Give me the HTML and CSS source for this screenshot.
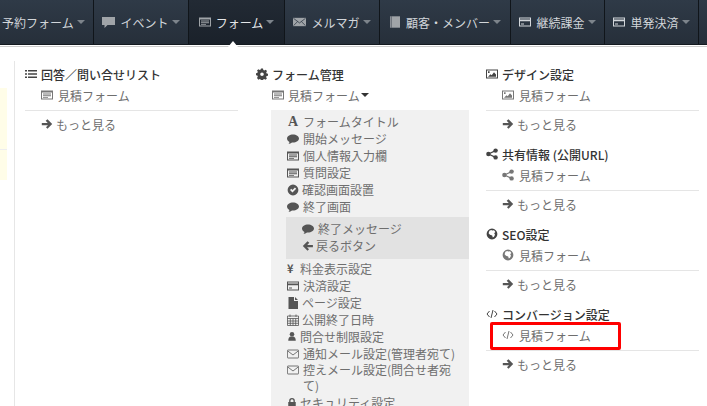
FILE: index.html
```html
<!DOCTYPE html>
<html lang="ja">
<head>
<meta charset="utf-8">
<title>フォーム</title>
<link rel="stylesheet" href="styles.css">
</head>
<body>
<svg class="defs" width="0" height="0">
  <symbol id="list" viewBox="0 0 12 12"><path d="M0 2h2v1.5H0zM3 2h9v1.5H3zM0 5.2h2v1.5H0zM3 5.2h9v1.5H3zM0 8.4h2v1.5H0zM3 8.4h9v1.5H3z"/></symbol>
  <symbol id="form" viewBox="0 0 12 12"><path fill-rule="evenodd" d="M0 1.500h12v9H0zM1 3.500v6h10v-6zM2 4.500h8v1H2zM2 6.300h8v1H2zM2 8h5v.8H2z"/></symbol>
  <symbol id="cog" viewBox="0 0 12 12"><path fill-rule="evenodd" d="M5 .5h2l.3 1.500 1 .5 1.400-.8 1.300 1.400-.8 1.300.5 1.100 1.300.3v2l-1.400.3-.5 1 .8 1.300-1.400 1.400-1.300-.8-1 .4-.3 1.500H5l-.3-1.500-1-.4-1.300.8L1 9.900l.8-1.300-.5-1L0 7.200v-2l1.300-.2.5-1.200L1 2.500l1.400-1.300 1.300.8 1-.5zM6 4.400a1.800 1.800 0 1 0 0 3.600 1.800 1.800 0 0 0 0-3.600z"/></symbol>
  <symbol id="pic" viewBox="0 0 12 12"><path fill-rule="evenodd" d="M0 1.500h12v9H0zM1 2.500v7h10v-7z"/><path d="M2 8.800l2.500-2.600 1.200 1 2.300-3 2 2.400v2.200zM2 3.300h1.600v1.600H2z"/></symbol>
  <symbol id="share" viewBox="0 0 12 12"><circle cx="2.400" cy="6" r="2.200"/><circle cx="9.600" cy="2.600" r="2.200"/><circle cx="9.600" cy="9.400" r="2.200"/><path d="M2.400 6l7.200-3.400M2.400 6l7.200 3.400" stroke="currentColor" stroke-width="1.300"/></symbol>
  <symbol id="globe" viewBox="0 0 12 12"><path fill-rule="evenodd" d="M6 .6a5.400 5.400 0 1 0 0 10.800A5.400 5.400 0 0 0 6 .6zM3.400 2.800l1.800-.8 1 .6 1.800-.3 1.400 1.800-1.200 1.200.8 1.400L8 8.800 6.800 9.600 6.200 7.400 4 6.800 2.600 5.200z"/></symbol>
  <symbol id="code" viewBox="0 0 12 12"><path d="M3.500 3L1 6l2.500 3M8.500 3L11 6 8.500 9M7 2L5 10" fill="none" stroke="currentColor" stroke-width="1"/></symbol>
  <symbol id="arrow" viewBox="0 0 12 12"><path d="M6.500 1.300L11.200 6l-4.700 4.700-1.500-1.500 2-2H.8V5h5.900l-2-2.200z"/></symbol>
  <symbol id="back" viewBox="0 0 12 12"><path d="M5.500 1.300L.8 6l4.700 4.700 1.500-1.500-2-2h5.900V5H5.300l2-2.200z"/></symbol>
  <symbol id="bubble" viewBox="0 0 12 12"><path d="M6 1.500c3.300 0 6 1.700 6 4s-2.700 4-6 4H5c-1 .9-2.200 1.400-3.600 1.500.6-.6 1-1.300 1-2.100C1 8.200 0 7 0 5.500c0-2.300 2.700-4 6-4z"/></symbol>
  <symbol id="square-bubble" viewBox="0 0 13 12"><path d="M0 1h13v8H5.500L2.500 12V9H0z"/></symbol>
  <symbol id="check" viewBox="0 0 12 12"><path fill-rule="evenodd" d="M6 .6a5.400 5.400 0 1 0 0 10.800A5.400 5.400 0 0 0 6 .6zM3 6l1.300-1.300 1.200 1.200 2.400-2.400L9.200 4.800 5.500 8.500z"/></symbol>
  <symbol id="card" viewBox="0 0 12 12"><path fill-rule="evenodd" d="M0 1.500h12v9H0zM1 5.200v4.300h10V5.200zM1 2.500v1h10v-1zM2 7.500h3v1H2z"/></symbol>
  <symbol id="file" viewBox="0 0 12 12"><path d="M1.500 0H7v4h4v8H1.500zM8 0l3 3H8z"/></symbol>
  <symbol id="cal" viewBox="0 0 12 12"><path d="M.5 2h11v9.500H.5zM.5 4.500h11M.5 7h11M.5 9.300h11M3.300 4.500v7M6 4.500v7M8.700 4.500v7M3 .5V3M9 .5V3" fill="none" stroke="currentColor" stroke-width=".8"/></symbol>
  <symbol id="user" viewBox="0 0 12 12"><circle cx="6" cy="3.200" r="2.700"/><path d="M1.500 11c0-3 1.200-4.700 2.800-5h3.400c1.600.3 2.800 2 2.800 5z"/></symbol>
  <symbol id="mail" viewBox="0 0 12 12"><path d="M1 2h10a.6.6 0 0 1 .6.600v6.800a.6.6 0 0 1-.6.600H1a.6.6 0 0 1-.6-.6V2.600A.6.6 0 0 1 1 2zM.8 3l5.200 4 5.200-4" fill="none" stroke="currentColor" stroke-width=".8"/></symbol>
  <symbol id="lock" viewBox="0 0 12 12"><path fill-rule="evenodd" d="M6 .5A3.400 3.400 0 0 0 2.600 4v1.500H1.500V12h9V5.500H9.400V4A3.400 3.400 0 0 0 6 .5zM4.200 5.500V4a1.800 1.800 0 0 1 3.600 0v1.500z"/></symbol>
  <symbol id="envfill" viewBox="0 0 14 12"><path d="M0 1.500h14v9H0z"/><path d="M.5 2l6.500 5 6.500-5M.5 10l4.500-4.500M13.500 10L9 5.500" fill="none" stroke="#2a3441" stroke-width=".8"/></symbol>
  <symbol id="book" viewBox="0 0 12 12"><path d="M1 .3H11v11.400H1z"/><path d="M2.200 .3v11.400" stroke="#2a3441" stroke-width=".6"/></symbol>
</svg>

<nav class="nav">
  <a class="nav-item first">予約フォーム<i class="caret"></i></a>
  <a class="nav-item w95"><svg class="ico nav-ico wide"><use href="#square-bubble"/></svg>イベント<i class="caret"></i></a>
  <a class="nav-item w96 active"><svg class="ico nav-ico"><use href="#form"/></svg>フォーム<i class="caret"></i></a>
  <a class="nav-item w95"><svg class="ico nav-ico wide"><use href="#envfill"/></svg>メルマガ<i class="caret"></i></a>
  <a class="nav-item w131"><svg class="ico nav-ico"><use href="#book"/></svg>顧客・メンバー<i class="caret"></i></a>
  <a class="nav-item w94"><svg class="ico nav-ico bright"><use href="#card"/></svg>継続課金<i class="caret"></i></a>
  <a class="nav-item w94"><svg class="ico nav-ico bright"><use href="#card"/></svg>単発決済<i class="caret"></i></a>
  <a class="nav-item end"></a>
</nav>

<main class="panel">
  <i class="notch"></i>
  <aside class="side">
    <div class="note"><div class="note-cell"></div><div class="note-cell"></div></div>
  </aside>

  <section class="col col-a">
    <div class="group">
      <h3 class="head"><svg class="ico"><use href="#list"/></svg>回答／問い合せリスト</h3>
      <a class="link"><svg class="ico"><use href="#form"/></svg>見積フォーム</a>
      <a class="more"><svg class="ico"><use href="#arrow"/></svg>もっと見る</a>
    </div>
  </section>

  <section class="col col-b">
    <h3 class="head"><svg class="ico"><use href="#cog"/></svg>フォーム管理</h3>
    <a class="link"><svg class="ico"><use href="#form"/></svg>見積フォーム<i class="caret dark"></i></a>
    <ul class="menu">
      <li><span class="letter">A</span>フォームタイトル</li>
      <li><svg class="ico"><use href="#bubble"/></svg>開始メッセージ</li>
      <li><svg class="ico"><use href="#form"/></svg>個人情報入力欄</li>
      <li><svg class="ico"><use href="#form"/></svg>質問設定</li>
      <li><svg class="ico gap3"><use href="#check"/></svg>確認画面設置</li>
      <li><svg class="ico"><use href="#bubble"/></svg>終了画面</li>
      <li class="sub">
        <ul>
          <li><svg class="ico"><use href="#bubble"/></svg>終了メッセージ</li>
          <li><svg class="ico gap2"><use href="#back"/></svg>戻るボタン</li>
        </ul>
      </li>
      <li><span class="yen">¥</span>料金表示設定</li>
      <li><svg class="ico"><use href="#card"/></svg>決済設定</li>
      <li><svg class="ico gap3"><use href="#file"/></svg>ページ設定</li>
      <li><svg class="ico gap3"><use href="#cal"/></svg>公開終了日時</li>
      <li><svg class="ico small"><use href="#user"/></svg>問合せ制限設定</li>
      <li><svg class="ico"><use href="#mail"/></svg>通知メール設定(管理者宛て)</li>
      <li class="wrap"><svg class="ico"><use href="#mail"/></svg><span>控えメール設定(問合せ者宛て)</span></li>
      <li><svg class="ico small"><use href="#lock"/></svg>セキュリティ設定</li>
    </ul>
  </section>

  <section class="col col-c">
    <div class="group">
      <h3 class="head"><svg class="ico"><use href="#pic"/></svg>デザイン設定</h3>
      <a class="link"><svg class="ico"><use href="#pic"/></svg>見積フォーム</a>
      <a class="more"><svg class="ico"><use href="#arrow"/></svg>もっと見る</a>
    </div>
    <div class="group">
      <h3 class="head"><svg class="ico"><use href="#share"/></svg>共有情報 (公開URL)</h3>
      <a class="link"><svg class="ico"><use href="#share"/></svg>見積フォーム</a>
      <a class="more"><svg class="ico"><use href="#arrow"/></svg>もっと見る</a>
    </div>
    <div class="group">
      <h3 class="head"><svg class="ico"><use href="#globe"/></svg>SEO設定</h3>
      <a class="link"><svg class="ico"><use href="#globe"/></svg>見積フォーム</a>
      <a class="more"><svg class="ico"><use href="#arrow"/></svg>もっと見る</a>
    </div>
    <div class="group">
      <h3 class="head"><svg class="ico"><use href="#code"/></svg>コンバージョン設定</h3>
      <a class="link"><svg class="ico"><use href="#code"/></svg>見積フォーム<i class="mark"></i></a>
      <a class="more"><svg class="ico"><use href="#arrow"/></svg>もっと見る</a>
    </div>
  </section>
</main>
</body>
</html>
```

FILE: styles.css
```css
* { box-sizing: border-box; }
html, body { margin: 0; height: 100%; overflow: hidden; }
body {
  width: 707px;
  height: 406px;
  background: #fff;
  font-family: "Noto Sans CJK JP", "Noto Sans", sans-serif;
  font-size: 12px;
  line-height: 17px;
  color: #6e6e6e;
}
.defs { display: block; height: 0; }
.ico { width: 12px; height: 12px; fill: currentColor; flex: none; margin-right: 4px; }

.nav {
  display: flex;
  height: 45px;
  margin-bottom: 1px;
  background: linear-gradient(#2f3a47, #262f3a);
  border-bottom: 1px solid #141a20;
}
.nav-item {
  display: flex;
  align-items: center;
  justify-content: center;
  height: 44px;
  border-right: 1px solid #10151a;
  color: #d2d6da;
  font-size: 12px;
  white-space: nowrap;
}
.first { width: 94px; padding-left: 2px; justify-content: flex-start; }
.w95 { width: 95px; }
.w96 { width: 96px; }
.w131 { width: 131px; }
.w94 { width: 94px; }
.end { flex: 1; border-right: 0; }
.active { background: linear-gradient(#222a34, #1a212a); color: #e4e6e8; }
.nav-ico { color: #a0a4a8; margin-right: 5px; }
.nav-ico.wide { width: 13px; }
.nav-ico.bright { color: #d2d6da; }
.caret {
  display: inline-block;
  margin-left: 3px;
  border-top: 4px solid #7d848b;
  border-left: 4px solid transparent;
  border-right: 4px solid transparent;
}
.caret.dark { border-top-color: #333; margin-left: 1px; }

.panel { position: relative; display: flex; height: 360px; padding-top: 14px; border-top: 1px solid #ccc; }
.notch {
  position: absolute;
  left: 228px;
  top: -6px;
  border-bottom: 6px solid #fff;
  border-left: 5px solid transparent;
  border-right: 5px solid transparent;
}
.side { width: 15px; flex: none; border-right: 1px solid #e6e6e6; padding-top: 27px; margin-right: 10px; }
.note { width: 7px; background: #fffde8; }
.note-cell { height: 62px; border-bottom: 1px solid #eee; }
.note-cell:last-child { height: 30px; border-bottom: 0; }

.col { flex: none; width: 213px; padding-top: 2px; }
.col-b { margin-left: 18px; }
.col-c { margin-left: 17px; }
.group { height: 80px; }

.head {
  display: flex;
  align-items: center;
  margin: 0;
  height: 22px;
  font-size: 12px;
  font-weight: 500;
  line-height: 17px;
  color: #333;
}
.head .ico { color: #444; }
.link {
  position: relative;
  display: flex;
  align-items: center;
  height: 20px;
  padding-left: 16px;
}
.link .ico { color: #777; }
.group .link .ico { margin-right: 5px; }
.more {
  display: flex;
  align-items: center;
  height: 24px;
  margin-top: 5px;
  padding: 3px 0 0 16px;
  border-top: 1px solid #e5e5e5;
}
.more .ico { color: #555; margin-right: 3px; }
.mark {
  position: absolute;
  left: 4px;
  top: -3px;
  width: 131px;
  height: 28px;
  border: 3px solid #f00;
  border-radius: 2px;
}

.menu {
  list-style: none;
  margin: 5px 0 0 15px;
  padding: 3px 0 0 16px;
  width: 198px;
  background: #f1f1f1;
}
.menu li { display: flex; align-items: center; min-height: 17px; }
.menu .ico { color: #555; }
.menu .ico.gap2 { margin-right: 2px; }
.menu .ico.gap3 { margin-right: 3px; }
.menu .ico.small { width: 10px; height: 11px; margin-right: 3px; }
.letter {
  width: 12px;
  margin-right: 4px;
  font-family: "Liberation Serif", serif;
  font-weight: 700;
  font-size: 14px;
  color: #555;
  text-align: center;
}
.yen { width: 8px; margin-right: 5px; font-size: 11px; font-weight: 700; color: #555; }
.menu li.wrap { align-items: flex-start; line-height: 16px; }
.wrap .ico { margin-top: 2px; }
.wrap span { flex: 1; padding-right: 10px; }
.menu .sub {
  display: block;
  margin: 2px 0 1px -1px;
  padding: 3px 0 5px 16px;
  background: #e2e2e2;
}
.sub ul { list-style: none; margin: 0; padding: 0; }
```
